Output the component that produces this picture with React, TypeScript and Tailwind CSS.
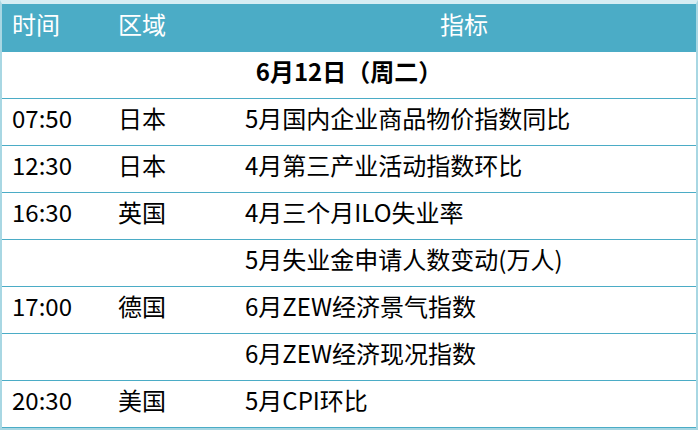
const rows = [
  { time: "07:50", area: "日本", item: "5月国内企业商品物价指数同比" },
  { time: "12:30", area: "日本", item: "4月第三产业活动指数环比" },
  { time: "16:30", area: "英国", item: "4月三个月ILO失业率" },
  { time: "", area: "", item: "5月失业金申请人数变动(万人)" },
  { time: "17:00", area: "德国", item: "6月ZEW经济景气指数" },
  { time: "", area: "", item: "6月ZEW经济现况指数" },
  { time: "20:30", area: "美国", item: "5月CPI环比" },
];

export default function App() {
  return (
    <div
      className="h-[432px] w-[698px] overflow-hidden bg-white text-[24px] leading-none text-black"
      style={{ fontFamily: '"Noto Sans CJK SC", "Liberation Sans", sans-serif' }}
    >
      <div className="border-t-[4px] border-b-[2px] border-l-[2px] border-r-[2px] border-[#a8d7e3] border-t-[#d6edf3]">
        <div className="grid h-[48px] grid-cols-[104px_126px_1fr] items-center bg-[#4bacc6] pb-2 text-white">
          <div className="pl-[10px]">时间</div>
          <div className="pl-[12px]">区域</div>
          <div className="text-center">指标</div>
        </div>
        <div className="flex h-[47px] items-center justify-center border-b border-[#4bacc6] pb-2 font-bold">
          6月12日（周二）
        </div>
        {rows.map((r, i) => (
          <div
            key={i}
            className="grid h-[47px] grid-cols-[104px_126px_1fr] items-center border-b border-[#4bacc6] pb-2"
          >
            <div className="pl-[10px]">{r.time}</div>
            <div className="pl-[12px]">{r.area}</div>
            <div className="pl-[13px]">{r.item}</div>
          </div>
        ))}
      </div>
    </div>
  );
}
